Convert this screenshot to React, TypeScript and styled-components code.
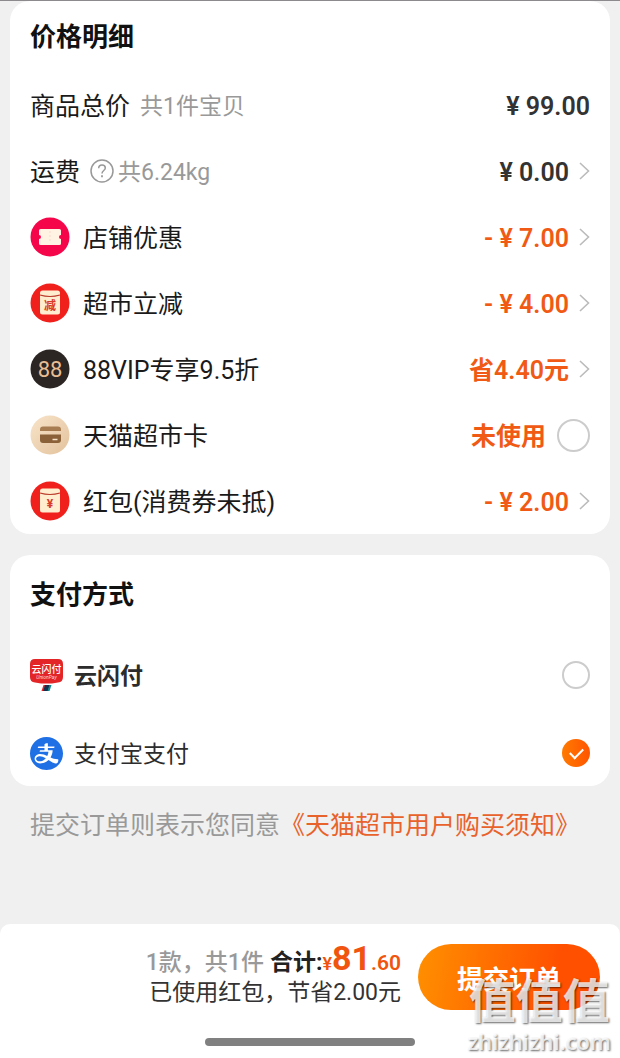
import React from "react";
import styled, { createGlobalStyle } from "styled-components";
import { AiFillAlipayCircle } from "react-icons/ai";

const GlobalStyle = createGlobalStyle`
  * { box-sizing: border-box; }
  body {
    margin: 0;
    background: #f0f0f0;
    color: #1a1a1a;
    font-family: Roboto, "Noto Sans CJK SC", sans-serif;
  }
  button, input { font: inherit; margin: 0; }
`;

const Page = styled.div`
  position: relative;
  display: flex;
  flex-direction: column;
  min-height: 100vh;
  border-top: 1px solid #8c8a8c;
`;

const Content = styled.main`
  display: flex;
  flex-direction: column;
  gap: 21px;
  padding: 0 10px;
`;

const Card = styled.section`
  background: #fff;
  border-radius: 20px;
  padding: 0 20px;
`;

const CardTitle = styled.h2`
  margin: 0;
  height: 71px;
  line-height: 72px;
  font-size: 26px;
  font-weight: 700;
  color: #111;
`;

const Row = styled.div`
  display: flex;
  align-items: center;
  justify-content: space-between;
  height: 66px;
`;

const RowLabel = styled.label`
  display: flex;
  align-items: center;
`;

const RowText = styled.span`
  padding-top: 3px;
  font-size: 25px;
  line-height: 36px;
`;

const RowIcon = styled.svg`
  width: 40px;
  height: 40px;
  margin-right: 13px;
`;

const Hint = styled(RowText)<{ $gap?: number }>`
  margin-left: ${(p) => p.$gap ?? 10}px;
  font-size: 23px;
  color: #999;
`;

const HelpButton = styled.button`
  display: flex;
  margin-left: 10px;
  padding: 0;
  border: 0;
  background: none;
  cursor: pointer;
`;

const Amount = styled(RowText)<{ $accent?: boolean }>`
  font-weight: 600;
  white-space: pre;
  color: ${(p) => (p.$accent ? "#f05a14" : "#333")};
`;

const AmountButton = styled.button`
  display: flex;
  align-items: center;
  gap: 10px;
  padding: 0;
  border: 0;
  background: none;
  cursor: pointer;
`;

const AmountGroup = styled.div`
  display: flex;
  align-items: center;
  gap: 11px;
`;

const PayCard = styled(Card)`
  display: flex;
  flex-direction: column;
  gap: 12px;
  padding-top: 4px;
`;

const PayRow = styled.label`
  display: flex;
  align-items: center;
  height: 66px;
  cursor: pointer;
`;

const PayName = styled.span<{ $bold?: boolean }>`
  flex: 1;
  margin-left: 11px;
  padding-top: 3px;
  font-size: 23px;
  line-height: 34px;
  font-weight: ${(p) => (p.$bold ? 600 : 400)};
  color: #2c2c2c;
`;

const Choice = styled.input<{ $size: number }>`
  appearance: none;
  display: grid;
  place-items: center;
  width: ${(p) => p.$size}px;
  height: ${(p) => p.$size}px;
  border: 2px solid #ccc;
  border-radius: 50%;
  background: #fff;
  cursor: pointer;
  &:checked {
    border: 0;
    background: linear-gradient(90deg, #ff7a00, #ff5500);
  }
  &:checked::before {
    content: "";
    width: 11px;
    height: 6px;
    margin-top: -3px;
    border-left: 2px solid #fff;
    border-bottom: 2px solid #fff;
    transform: rotate(-45deg);
  }
`;

const Agreement = styled.p`
  margin: 0;
  padding: 0 20px;
  font-size: 25px;
  line-height: 38px;
  color: #999;
`;

const AgreementLink = styled.a`
  color: #e8622c;
  text-decoration: none;
`;

const Footer = styled.footer`
  margin-top: auto;
  background: #fff;
  border-radius: 10px 10px 0 0;
`;

const FooterBar = styled.div`
  display: flex;
  align-items: center;
  justify-content: flex-end;
  gap: 17px;
  padding: 20px 20px 16px 0;
`;

const Summary = styled.div`
  display: flex;
  flex-direction: column;
  align-items: flex-end;
  font-size: 23px;
  line-height: 31px;
  color: #333;
`;

const TotalLine = styled.div`
  display: flex;
  align-items: baseline;
  height: 31px;
  font-weight: 500;
`;

const Count = styled.span`
  margin-right: 6px;
  color: #999;
`;

const TotalLabel = styled.span`
  font-weight: 700;
  color: #222;
`;

const Price = styled.span`
  font-size: 21px;
  font-weight: 600;
  color: #f0540f;
`;

const PriceSign = styled(Price)`
  font-size: 18px;
`;

const PriceMain = styled(Price)`
  font-size: 34px;
  line-height: 24px;
  font-weight: 700;
`;

const Submit = styled.button`
  width: 182px;
  height: 66px;
  padding: 0;
  border: 0;
  border-radius: 33px;
  background: linear-gradient(100deg, #ff9000, #ff5000 75%);
  color: #fff;
  font-size: 26px;
  font-weight: 700;
  cursor: pointer;
`;

const HomeIndicator = styled.div`
  width: 210px;
  height: 8px;
  margin: 12px auto;
  border-radius: 4px;
  background: #808080;
`;

const Watermark = styled.div`
  position: absolute;
  right: 9px;
  bottom: 2px;
  display: flex;
  flex-direction: column;
  align-items: center;
  color: rgba(255, 255, 255, 0.8);
  text-shadow: 1px 1px 2px rgba(0, 0, 0, 0.6);
  pointer-events: none;
`;

const WatermarkName = styled.span`
  font-size: 47px;
  line-height: 48px;
  font-weight: 700;
`;

const WatermarkSite = styled.span`
  font-family: "Open Sans", sans-serif;
  font-size: 22px;
  line-height: 30px;
  font-weight: 600;
`;

const Chevron = () => (
  <svg width="11" height="18" viewBox="0 0 11 18" fill="none" stroke="#bbb" strokeWidth="1.6" aria-hidden="true">
    <path d="M1 1l8.5 8L1 17" />
  </svg>
);

const HelpIcon = () => (
  <svg width="24" height="24" viewBox="0 0 24 24" fill="none" stroke="#999" strokeWidth="1.5" aria-hidden="true">
    <circle cx="12" cy="12" r="11" />
    <path d="M8.7 9.3c0-2 1.400-3.300 3.300-3.300s3.300 1.300 3.300 3c0 2.400-3.300 2.600-3.300 5.400" />
    <path d="M12 16.300v2" strokeWidth="1.800" />
  </svg>
);

const CouponIcon = () => (
  <RowIcon viewBox="0 0 40 40" aria-hidden="true">
    <circle cx="20" cy="20" r="19.500" fill="#f5054a" />
    <path
      d="M10.500 12h19a1.500 1.500 0 0 1 1.500 1.500v4.500a2 2 0 0 0 0 4v4.500a1.500 1.500 0 0 1-1.500 1.500h-19a1.500 1.500 0 0 1-1.500-1.500v-4.500a2 2 0 0 0 0-4v-4.500a1.500 1.500 0 0 1 1.500-1.500z"
      fill="#fff3e4"
    />
    <path d="M20 14v12" stroke="#fbd9cd" strokeDasharray="2 2" />
  </RowIcon>
);

const EnvelopeIcon = ({ mark }: { mark: string }) => (
  <RowIcon viewBox="0 0 40 40" aria-hidden="true">
    <circle cx="20" cy="20" r="19.500" fill="#f0201c" />
    <rect x="10" y="7.500" width="20" height="24" rx="2.500" fill="#ffedd0" />
    <path d="M10 12q10 3 20 0" fill="none" stroke="#b93a2a" strokeWidth="1.200" />
    <text x="20" y="26.500" textAnchor="middle" fontSize="12" fontWeight="700" fill="#d93a28">
      {mark}
    </text>
  </RowIcon>
);

const VipIcon = () => (
  <RowIcon viewBox="0 0 40 40" aria-hidden="true">
    <circle cx="20" cy="20" r="19.500" fill="#2b2523" />
    <text x="20" y="28" textAnchor="middle" fontSize="22" fill="#e8bd94">
      88
    </text>
  </RowIcon>
);

const CardIcon = () => (
  <RowIcon viewBox="0 0 40 40" aria-hidden="true">
    <defs>
      <linearGradient id="sand" x1="0" y1="0" x2="1" y2="1">
        <stop offset="0" stopColor="#f8e4ca" />
        <stop offset="1" stopColor="#e3c29c" />
      </linearGradient>
    </defs>
    <circle cx="20" cy="20" r="19.500" fill="url(#sand)" />
    <path d="M10 16v-1.500a3 3 0 0 1 3-3h15a3 3 0 0 1 3 3V16z" fill="#a67c50" />
    <path d="M10 19.500h21V25a3 3 0 0 1-3 3H13a3 3 0 0 1-3-3z" fill="#8a6138" />
    <path d="M22.500 24.500h5" stroke="#f7e3c8" strokeWidth="1.500" />
  </RowIcon>
);

const UnionPayIcon = () => (
  <svg width="33" height="33" viewBox="0 0 33 33" aria-hidden="true">
    <path d="M5 0h23q5 0 5 5v13q0 5-5 5.500l-6 1H11l-6-1Q0 23 0 18V5q0-5 5-5z" fill="#e42528" />
    <text x="16.500" y="14" textAnchor="middle" fontSize="10" fontWeight="500" fill="#fff">
      云闪付
    </text>
    <text x="16.500" y="20" textAnchor="middle" fontSize="5" fontStyle="italic" fill="#ffd5d0">
      UnionPay
    </text>
    <path d="M13.500 26h2l-2 6h-2z" fill="#e42528" />
    <path d="M15 26h5l-2 6h-5z" fill="#14304e" />
    <path d="M19.500 26h2l-2 6h-2z" fill="#0b8a8c" />
  </svg>
);

type Discount = { icon: React.ReactNode; name: string; amount: string; selectable?: boolean };

const discounts: Discount[] = [
  { icon: <CouponIcon />, name: "店铺优惠", amount: "- ¥ 7.00" },
  { icon: <EnvelopeIcon mark="减" />, name: "超市立减", amount: "- ¥ 4.00" },
  { icon: <VipIcon />, name: "88VIP专享9.5折", amount: "省4.40元" },
  { icon: <CardIcon />, name: "天猫超市卡", amount: "未使用", selectable: true },
  { icon: <EnvelopeIcon mark="¥" />, name: "红包(消费券未抵)", amount: "- ¥ 2.00" },
];

export default function App() {
  return (
    <>
      <GlobalStyle />
      <Page>
        <Content>
          <Card>
            <CardTitle>价格明细</CardTitle>
            <Row>
              <RowLabel as="div">
                <RowText>商品总价</RowText>
                <Hint>共1件宝贝</Hint>
              </RowLabel>
              <Amount>¥ 99.00</Amount>
            </Row>
            <Row>
              <RowLabel as="div">
                <RowText>运费</RowText>
                <HelpButton type="button" aria-label="运费说明">
                  <HelpIcon />
                </HelpButton>
                <Hint $gap={4}>共6.24kg</Hint>
              </RowLabel>
              <AmountButton type="button">
                <Amount>¥ 0.00</Amount>
                <Chevron />
              </AmountButton>
            </Row>
            {discounts.map((d) => (
              <Row key={d.name}>
                {d.selectable ? (
                  <>
                    <RowLabel htmlFor="market-card">
                      {d.icon}
                      <RowText>{d.name}</RowText>
                    </RowLabel>
                    <AmountGroup>
                      <Amount $accent>{d.amount}</Amount>
                      <Choice $size={33} type="checkbox" id="market-card" />
                    </AmountGroup>
                  </>
                ) : (
                  <>
                    <RowLabel as="div">
                      {d.icon}
                      <RowText>{d.name}</RowText>
                    </RowLabel>
                    <AmountButton type="button">
                      <Amount $accent>{d.amount}</Amount>
                      <Chevron />
                    </AmountButton>
                  </>
                )}
              </Row>
            ))}
          </Card>

          <PayCard>
            <CardTitle>支付方式</CardTitle>
            <PayRow>
              <UnionPayIcon />
              <PayName $bold>云闪付</PayName>
              <Choice $size={28} type="radio" name="pay" />
            </PayRow>
            <PayRow>
              <AiFillAlipayCircle size={33} viewBox="64 64 896 896" color="#1f6fe5" aria-hidden="true" />
              <PayName>支付宝支付</PayName>
              <Choice $size={28} type="radio" name="pay" defaultChecked />
            </PayRow>
          </PayCard>

          <Agreement>
            提交订单则表示您同意<AgreementLink href="#terms">《天猫超市用户购买须知》</AgreementLink>
          </Agreement>
        </Content>

        <Footer>
          <FooterBar>
            <Summary>
              <TotalLine>
                <Count>1款，共1件</Count>
                <TotalLabel>合计:</TotalLabel>
                <PriceSign>¥</PriceSign>
                <PriceMain>81</PriceMain>
                <Price>.60</Price>
              </TotalLine>
              <div>已使用红包，节省2.00元</div>
            </Summary>
            <Submit type="button">提交订单</Submit>
          </FooterBar>
          <HomeIndicator />
        </Footer>

        <Watermark aria-hidden="true">
          <WatermarkName>值值值</WatermarkName>
          <WatermarkSite>zhizhizhi.com</WatermarkSite>
        </Watermark>
      </Page>
    </>
  );
}
